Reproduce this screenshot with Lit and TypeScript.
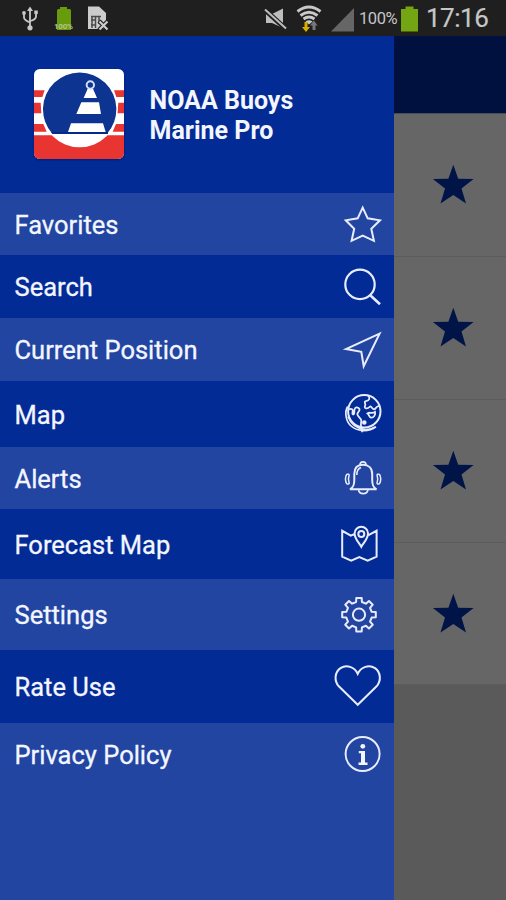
import { LitElement, html, svg, css } from "lit";
import { customElement } from "lit/decorators.js";

const gearPath = (() => {
  const pts: string[] = [];
  const at = (r: number, deg: number) => {
    const a = (deg * Math.PI) / 180;
    return `${(25 + r * Math.sin(a)).toFixed(2)} ${(29.7 - r * Math.cos(a)).toFixed(2)}`;
  };
  for (let i = 0; i < 8; i++) {
    const c = i * 45;
    pts.push(at(13, c - 13), at(17, c - 9), at(17, c + 9), at(13, c + 13));
  }
  return "M" + pts.join("L") + "Z";
})();

const icons = {
  star: svg`<path d="M28.7 13.6 33.7 24.3 46 26.3 37.3 34.8 39.9 46.8 28.7 41.5 17.6 46.8 20.2 34.8 11.8 26.3 23.7 24.3Z"/>`,
  search: svg`<circle cx="26" cy="27.4" r="14.7" stroke-width="2.2"/><path stroke-width="2.6" d="M36.5 38.5 46 47.2"/>`,
  arrow: svg`<path d="M45.6 13.6 12 29 27.3 31.8 29.7 46.2Z"/>`,
  globe: svg`<circle cx="30.3" cy="27.3" r="16.2"/>
    <path stroke-width="1.7" d="M13.7 22.5C10.5 27.5 11.5 36.5 16.5 41.5 23 47.5 34 48.5 42 42.8M14 32.5C16.5 39.5 22.5 44.5 31 45.5 35 45.8 39 44.5 41 43M28 46.2V48.2"/>
    <path stroke-width="1.8" d="M14.8 25.5C17.5 24 19.5 25.5 18.5 28.5 17.8 31 20.5 31.5 20.3 28 20 24 22 22.5 24.5 24 27 25.5 24.5 27.5 23.5 29.5 22.5 31.5 25.5 33 27 35.5 28.3 38.5 25.5 40 27.5 43.2"/>
    <path stroke-width="1.8" d="M34 11.7C36.5 14 35.5 16.5 32 17.2 29 18 32.5 19.5 31 22 29.8 24.8 33.5 25.2 35.5 23 37.5 20.8 37.5 25.2 40 25.3 42.5 25.2 41 22.5 45.3 21.8M33.5 29.5C35.5 27.5 38.5 30.2 41 27.8 42 31 39.5 34 36.8 33.5 34.5 33 35.8 31 33.5 29.5Z"/>
    <circle cx="30.3" cy="38.5" r="1.3" fill="#eef"/>`,
  bell: svg`<path d="M16 41.3C19.3 39.5 20.3 37.5 20.3 32V26C20.3 20 23.5 16.8 29 16.8S38.2 20 38.2 26V32C38.2 37.5 39.2 39.5 42.5 41.3Z"/>
    <path stroke-width="1.6" d="M26 17C26 12.8 32 12.8 32 17M24.5 42C25.5 46.8 33 46.8 34 42M22.8 27C22.8 22.5 24 20.5 27 19.5"/>
    <path stroke-width="1.5" d="M15.3 26.2C14.3 29 14.3 33 15.3 36M12.8 26.2C11.2 29 11.2 33 12.8 36M12.8 26.2 15.3 26.2M12.8 36H15.3M42.9 26.2C43.9 29 43.9 33 42.9 36M45.4 26.2C47 29 47 33 45.4 36M42.9 26.2H45.4M42.9 36H45.4"/>`,
  map: svg`<path d="M20.2 20.2 16.8 21.7 8.2 16.8V42.6L17.2 46.7 25.3 43.2 33.7 46.7 42.6 42.6V16.8L34.5 21.2M27.3 32.8C25 28.5 20.6 25 20.6 19.5A6.7 6.7 0 0 1 34 19.5C34 25 29.6 28.5 27.3 32.8Z"/><circle cx="27.3" cy="19.9" r="3"/>`,
  gear: svg`<path stroke-linejoin="round" d="${gearPath}"/><circle cx="25" cy="29.7" r="6.1"/>`,
  heart: svg`<path d="M23.7 47.8 4.8 29.3C0 23.8 .5 15.3 6.5 11.1 12.5 7.3 20.5 9.8 23.7 16.8 27 9.8 35 7.3 41 11.1 47 15.3 47.3 23.8 42.6 29.3Z"/>`,
  info: svg`<circle cx="28.6" cy="30" r="17"/><g fill="#f4f6ff" stroke="none"><circle cx="28.8" cy="22.3" r="2.4"/><path d="M24.8 27H31V38.5H33.5V41H24.5V38.5H27V29.2H24.8Z"/></g>`,
};

const items = [
  { label: "Favorites", icon: icons.star, h: 62 },
  { label: "Search", icon: icons.search, h: 63 },
  { label: "Current Position", icon: icons.arrow, h: 63 },
  { label: "Map", icon: icons.globe, h: 66 },
  { label: "Alerts", icon: icons.bell, h: 62 },
  { label: "Forecast Map", icon: icons.map, h: 70 },
  { label: "Settings", icon: icons.gear, h: 71 },
  { label: "Rate Use", icon: icons.heart, h: 73 },
  { label: "Privacy Policy", icon: icons.info, h: 62 },
];

@customElement("status-bar")
class StatusBar extends LitElement {
  static styles = css`
    :host { display: flex; height: 36px; background: #1f1f1f; color: #c6c6c6; font-family: Roboto, sans-serif; align-items: center; }
    svg { display: block; flex: none; }
    .gap { flex: 1; }
    .pct { font-size: 16.5px; width: 40px; margin-left: 4px; white-space: nowrap; letter-spacing: -.4px; line-height: 36px; padding-top: 2px; }
    .battery { margin-left: 2px; }
    .time { font-size: 26px; width: 80px; margin-left: 8px; line-height: 36px; letter-spacing: -.5px; white-space: nowrap; -webkit-text-stroke: .2px; }
  `;
  render() {
    return html`
      <svg width="120" height="36" viewBox="0 0 120 36">
        <g fill="none" stroke="#c8c8c8" stroke-width="1.8">
          <path d="M30 10V28M24 13V17.5Q24 20 30 22.5M36 12V16.5Q36 19.5 30 21"/>
        </g>
        <g fill="#c8c8c8"><path d="M27 11 30 6.5 33 11Z"/><circle cx="30" cy="27.8" r="2.6"/><circle cx="24" cy="13" r="1.9"/><path d="M34.3 10.5h3.5V14h-3.5z"/></g>
        <path fill="#689c0c" d="M57 10.5Q57 9 58.5 9H60V7H67V9H69.5Q71 9 71 10.5V30H57Z"/>
        <text x="54" y="29" font-size="8" font-weight="700" textLength="19" fill="#b4c58c">100%</text>
        <path fill="#ccc" d="M88 6.5H99L106 13V29H88Z"/>
        <path stroke="#4a4a4a" stroke-width="1.5" fill="none" d="M91 16.5H101M92 16V28M95.5 16V28M99 16V24M91 20H95M91 25H95"/>
        <path stroke="#1f1f1f" stroke-width="4.4" d="M99 21 108 30M108 21 99 30"/>
        <path stroke="#ccc" stroke-width="2.2" d="M99.5 21.5 107.5 29.5M107.5 21.5 99.5 29.5"/>
      </svg>
      <span class="gap"></span>
      <svg width="92" height="36" viewBox="263 0 92 36">
        <path fill="#bdbdbd" d="M266 14H272L283 8.5V28L272 23H266Z"/>
        <path stroke="#1f1f1f" stroke-width="5" d="M264 9 286 29"/>
        <path stroke="#bdbdbd" stroke-width="2" d="M265 9.5 286 28.5"/>
        <g fill="none" stroke="#c9c9c9" stroke-width="2.9"><path d="M297.5 11.5Q309 2.5 320.5 11.5M300.5 15.5Q309 9 317.5 15.5M303.5 19Q309 15 314.5 19"/></g>
        <path fill="#c9c9c9" d="M305.5 21.5Q309 19 312.5 21.5L309 24.5Z"/>
        <path fill="#d6ae00" d="M304.5 22H307.5V27H310L306 32 302 27H304.5Z"/>
        <path fill="#777" d="M312.5 30V25.5H310L313.8 20.5 317.6 25.5H315.5V30Z"/>
        <path fill="#666" d="M354 8V31.5H331Z"/>
      </svg>
      <span class="pct">100%</span>
      <svg class="battery" width="17" height="36" viewBox="0 0 17 36"><path fill="#74a512" d="M0 9H4.5V6.5H12.5V9H17V31.5H0Z"/></svg>
      <span class="time">17:16</span>
    `;
  }
}

@customElement("app-root")
class AppRoot extends LitElement {
  static styles = css`
    :host { display: flex; flex-direction: column; width: 506px; height: 900px; overflow: hidden; font-family: Roboto, sans-serif; }
    .body { display: flex; flex: 1; min-height: 0; }
    .drawer { width: 394px; background: #2145a1; color: #f4f6ff; }
    .brand { height: 157px; background: #032b96; display: flex; box-sizing: border-box; padding: 33px 0 0 34px; }
    .logo { width: 90px; height: 90px; display: block; filter: drop-shadow(0 1px 1px #001c70); }
    .name { margin: 17px 0 0 25.5px; font-size: 25px; line-height: 30px; font-weight: 700; white-space: nowrap; }
    .item { display: flex; align-items: center; justify-content: space-between; padding-left: 14.5px; font-size: 25.5px; }
    .item:nth-child(odd) { background: #032b96; }
    .label { padding-top: 1px; white-space: nowrap; -webkit-text-stroke: .3px; }
    .icon { width: 60px; height: 60px; fill: none; stroke: #e9ecff; stroke-width: 2; }
    .page { flex: 1; background: #5a5a5a; }
    .bar { height: 78px; background: #00103f; border-bottom: 1px solid #454b58; box-sizing: border-box; }
    .card { height: 143px; background: #666; border-bottom: 1px solid #5c5c5c; box-sizing: border-box; display: flex; align-items: center; padding-left: 38px; }
    .card:last-child { height: 142px; }
    .fav { width: 42px; height: 42px; fill: #001447; }
  `;
  render() {
    return html`
      <status-bar></status-bar>
      <div class="body">
        <div class="drawer">
          <div class="brand">
            <svg class="logo" viewBox="42 27 270 270">
              <defs><clipPath id="box"><rect x="42" y="27" width="270" height="270" rx="17"/></clipPath></defs>
              <g clip-path="url(#box)">
                <path fill="#fff" d="M42 27H312V297H42Z"/>
                <path fill="#e83532" d="M42 91H74L67 111H42ZM42 128H62L64 160H42ZM42 192H70L80 215H42ZM312 91H282L289 111H312ZM312 128H295L292 160H312ZM312 192H288L278 215H312ZM42 226H312V297H42Z"/>
                <circle cx="179" cy="148" r="114" fill="#fff"/>
                <path fill="#0c3490" d="M97 221A110 110 0 1 1 261 221Z"/>
                <path fill="#062a87" d="M93 216H264V222H98Z"/>
                <g fill="#fff"><path d="M203 86H219L231 114H191ZM184 127H237L243 162H169ZM153 190H249L257 216H144Z"/></g>
                <circle cx="211" cy="75" r="11" fill="none" stroke="#d3def7" stroke-width="6"/>
              </g>
            </svg>
            <div class="name">NOAA Buoys<br>Marine Pro</div>
          </div>
          ${items.map(
            (i) => html`<div class="item" style="height:${i.h}px">
              <span class="label">${i.label}</span>
              <svg class="icon" viewBox="0 0 60 60">${i.icon}</svg>
            </div>`
          )}
        </div>
        <div class="page">
          <div class="bar"></div>
          ${[0, 1, 2, 3].map(
            () => html`<div class="card"><svg class="fav" viewBox="0 0 42 42"><path d="M21.3.8 26.2 14.8 41.6 15 29.5 24.5 34 39.6 21.3 31 8.5 39.6 13 24.5.9 15 16.4 14.8Z"/></svg></div>`
          )}
        </div>
      </div>
    `;
  }
}
